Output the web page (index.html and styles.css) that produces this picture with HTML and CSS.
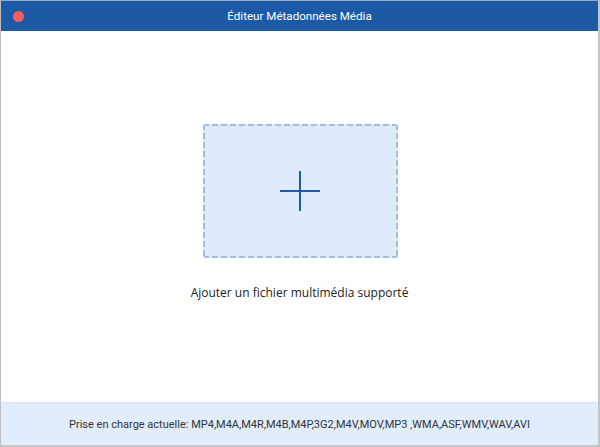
FILE: index.html
```html
<!DOCTYPE html>
<html lang="fr">
<head>
<meta charset="utf-8">
<title>Éditeur Métadonnées Média</title>
<link rel="stylesheet" href="styles.css">
</head>
<body>
<div class="window">
  <header class="titlebar">
    <span class="close-dot"></span>
    <span class="title">Éditeur Métadonnées Média</span>
  </header>
  <main class="content">
    <div class="dropzone">
      <svg class="plus" width="42" height="42" viewBox="0 0 42 42">
        <path d="M21 1 V41 M1 21 H41" stroke="#1f5aa6" stroke-width="2" fill="none"/>
      </svg>
    </div>
    <p class="hint">Ajouter un fichier multimédia supporté</p>
  </main>
  <footer class="footer">Prise en charge actuelle: MP4,M4A,M4R,M4B,M4P,3G2,M4V,MOV,MP3 ,WMA,ASF,WMV,WAV,AVI</footer>
</div>
</body>
</html>
```
FILE: styles.css
```css
html, body {
  margin: 0;
  padding: 0;
  background: #ffffff;
}
.window {
  width: 600px;
  height: 447px;
  box-sizing: border-box;
  border-left: 1px solid #bdbdbd;
  border-right: 2px solid #c4c4c4;
  border-bottom: 2px solid #c4c4c4;
  border-top: 1px solid #9aa9bd;
  display: flex;
  flex-direction: column;
  font-family: "Roboto", "Liberation Sans", sans-serif;
  color: #222;
}
.titlebar {
  height: 30px;
  background: #1c5aa6;
  position: relative;
  display: flex;
  align-items: center;
  justify-content: center;
  flex-shrink: 0;
}
.close-dot {
  position: absolute;
  left: 12px;
  top: 10px;
  width: 11px;
  height: 11px;
  border-radius: 50%;
  background: #f1605a;
}
.title {
  color: #ffffff;
  font-size: 11.6px;
}
.content {
  flex: 1;
  display: flex;
  flex-direction: column;
  align-items: center;
  padding-top: 93px;
}
.dropzone {
  width: 195px;
  height: 134px;
  box-sizing: border-box;
  border-radius: 3px;
  background-color: #dfebfc;
  background-image:
    repeating-linear-gradient(90deg, #a3bddf 0 6px, transparent 6px 9px),
    repeating-linear-gradient(90deg, #a3bddf 0 6px, transparent 6px 9px),
    repeating-linear-gradient(180deg, #a3bddf 0 6px, transparent 6px 9px),
    repeating-linear-gradient(180deg, #a3bddf 0 6px, transparent 6px 9px);
  background-size: 100% 2px, 100% 2px, 2px 100%, 2px 100%;
  background-position: 0 0, 0 100%, 0 0, 100% 0;
  background-repeat: no-repeat;
  display: flex;
  align-items: center;
  justify-content: center;
  margin-left: 1px;
}
.plus {
  display: block;
}
.hint {
  margin: 26px 0 0;
  font-family: "Open Sans", "Liberation Sans", sans-serif;
  font-size: 12px;
  color: #222;
}
.footer {
  height: 43px;
  flex-shrink: 0;
  box-sizing: border-box;
  background: #e1edfc;
  border-top: 1px solid #d4e2f3;
  display: flex;
  align-items: center;
  justify-content: center;
  font-size: 11px;
  color: #333;
}
```
